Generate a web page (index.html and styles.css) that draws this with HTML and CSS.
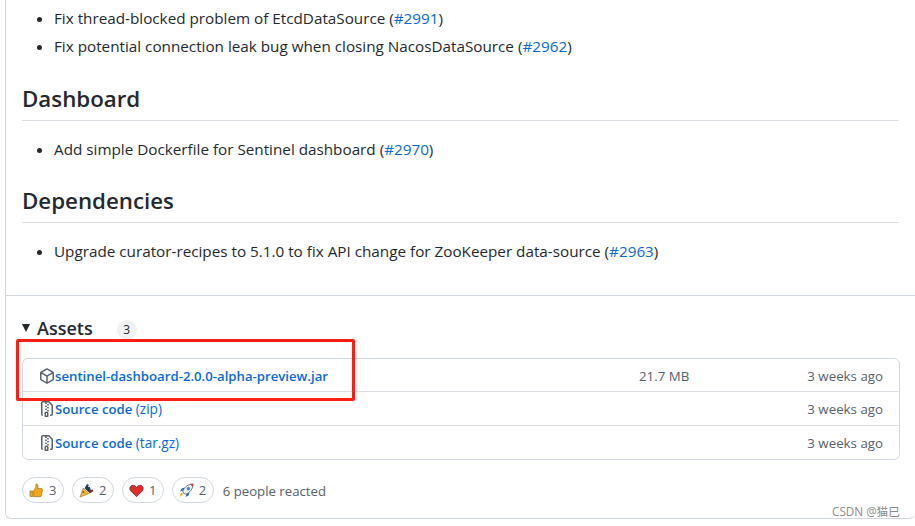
FILE: index.html
```html
<!DOCTYPE html>
<html lang="en">
<head>
  <meta charset="UTF-8" />
  <title>Release notes</title>
  <link rel="stylesheet" href="styles.css">
</head>
<body>
  <div class="release">
    <div class="notes">
      <ul>
        <li>Fix thread-blocked problem of EtcdDataSource (<a href="#">#2991</a>)</li>
        <li>Fix potential connection leak bug when closing NacosDataSource (<a href="#">#2962</a>)</li>
      </ul>
      <h2>Dashboard</h2>
      <ul>
        <li>Add simple Dockerfile for Sentinel dashboard (<a href="#">#2970</a>)</li>
      </ul>
      <h2>Dependencies</h2>
      <ul>
        <li>Upgrade curator-recipes to 5.1.0 to fix API change for ZooKeeper data-source (<a href="#">#2963</a>)</li>
      </ul>
    </div>

    <div class="assets">
      <div class="assets-head">
        <span class="caret"></span>
        <span class="assets-title">Assets</span>
        <span class="counter">3</span>
      </div>

      <div class="asset-box">
        <div class="asset-row">
          <svg class="asset-icon" viewBox="0 0 16 16" width="16" height="16"><path fill="#57606a" fill-rule="evenodd" d="M8.878.392a1.75 1.75 0 0 0-1.756 0l-5.25 3.045A1.75 1.75 0 0 0 1 4.951v6.098c0 .624.332 1.2.872 1.514l5.25 3.045a1.75 1.75 0 0 0 1.756 0l5.25-3.045c.54-.313.872-.89.872-1.514V4.951c0-.624-.332-1.201-.872-1.514L8.878.392ZM7.875 1.69a.25.25 0 0 1 .25 0l4.63 2.685L8 7.133 3.245 4.375l4.63-2.685ZM2.5 5.677v5.372c0 .09.047.171.125.216l4.625 2.683V8.432L2.5 5.677Zm6.25 8.271 4.625-2.683a.25.25 0 0 0 .125-.216V5.677L8.75 8.432v5.516Z"/></svg>
          <a class="asset-name" href="#">sentinel-dashboard-2.0.0-alpha-preview.jar</a>
          <span class="asset-size">21.7 MB</span>
          <span class="asset-time">3 weeks ago</span>
        </div>
        <div class="asset-row">
          <svg class="asset-icon" viewBox="0 0 16 16" width="16" height="16"><path fill="#57606a" fill-rule="evenodd" d="M3.5 1.75v11.5c0 .09.048.173.126.217a.75.75 0 0 1-.752 1.298A1.748 1.748 0 0 1 2 13.25V1.75C2 .784 2.784 0 3.75 0h5.586c.464 0 .909.185 1.237.513l2.914 2.914c.329.328.513.773.513 1.237v8.586A1.75 1.75 0 0 1 12.25 15h-.5a.75.75 0 0 1 0-1.5h.5a.25.25 0 0 0 .25-.25V4.664a.25.25 0 0 0-.073-.177L9.513 1.573a.25.25 0 0 0-.177-.073H7.25a.75.75 0 0 1 0 1.5h-.5a.75.75 0 0 1 0-1.5h-3a.25.25 0 0 0-.25.25Zm3.75 8.75h.5c.966 0 1.75.784 1.75 1.75v3a.75.75 0 0 1-.75.75h-2.5a.75.75 0 0 1-.75-.75v-3c0-.966.784-1.75 1.75-1.75ZM6 5.25a.75.75 0 0 1 .75-.75h.5a.75.75 0 0 1 0 1.5h-.5A.75.75 0 0 1 6 5.25Zm.75 2.25h.5a.75.75 0 0 1 0 1.5h-.5a.75.75 0 0 1 0-1.5ZM8 6.75A.75.75 0 0 1 8.75 6h.5a.75.75 0 0 1 0 1.5h-.5A.75.75 0 0 1 8 6.75ZM8.75 3h.5a.75.75 0 0 1 0 1.5h-.5a.75.75 0 0 1 0-1.5ZM8 9.75A.75.75 0 0 1 8.75 9h.5a.75.75 0 0 1 0 1.5h-.5A.75.75 0 0 1 8 9.75Zm-1 2.5v2.25h1v-2.25a.25.25 0 0 0-.25-.25h-.5a.25.25 0 0 0-.25.25Z"/></svg>
          <a class="asset-name" href="#">Source code <span class="light">(zip)</span></a>
          <span class="asset-time">3 weeks ago</span>
        </div>
        <div class="asset-row">
          <svg class="asset-icon" viewBox="0 0 16 16" width="16" height="16"><path fill="#57606a" fill-rule="evenodd" d="M3.5 1.75v11.5c0 .09.048.173.126.217a.75.75 0 0 1-.752 1.298A1.748 1.748 0 0 1 2 13.25V1.75C2 .784 2.784 0 3.75 0h5.586c.464 0 .909.185 1.237.513l2.914 2.914c.329.328.513.773.513 1.237v8.586A1.75 1.75 0 0 1 12.25 15h-.5a.75.75 0 0 1 0-1.5h.5a.25.25 0 0 0 .25-.25V4.664a.25.25 0 0 0-.073-.177L9.513 1.573a.25.25 0 0 0-.177-.073H7.25a.75.75 0 0 1 0 1.5h-.5a.75.75 0 0 1 0-1.5h-3a.25.25 0 0 0-.25.25Zm3.75 8.75h.5c.966 0 1.75.784 1.75 1.75v3a.75.75 0 0 1-.75.75h-2.5a.75.75 0 0 1-.75-.75v-3c0-.966.784-1.75 1.75-1.75ZM6 5.25a.75.75 0 0 1 .75-.75h.5a.75.75 0 0 1 0 1.5h-.5A.75.75 0 0 1 6 5.25Zm.75 2.25h.5a.75.75 0 0 1 0 1.5h-.5a.75.75 0 0 1 0-1.5ZM8 6.75A.75.75 0 0 1 8.75 6h.5a.75.75 0 0 1 0 1.5h-.5A.75.75 0 0 1 8 6.75ZM8.75 3h.5a.75.75 0 0 1 0 1.5h-.5a.75.75 0 0 1 0-1.5ZM8 9.75A.75.75 0 0 1 8.75 9h.5a.75.75 0 0 1 0 1.5h-.5A.75.75 0 0 1 8 9.75Zm-1 2.5v2.25h1v-2.25a.25.25 0 0 0-.25-.25h-.5a.25.25 0 0 0-.25.25Z"/></svg>
          <a class="asset-name" href="#">Source code <span class="light">(tar.gz)</span></a>
          <span class="asset-time">3 weeks ago</span>
        </div>
      </div>

      <div class="reactions">
        <span class="pill">
          <svg viewBox="0 0 16 16" width="15" height="15"><path fill="#f0a81e" stroke="#8a5a10" stroke-width=".6" d="M1 8.5h3v6H1.6a.6.6 0 0 1-.6-.6ZM5 8l2.3-3.6V1.6c0-.6 1.9-.7 2.2.9.2 1 0 2.3-.3 3.3h4c1.1 0 1.4 1 1.1 1.8l-1.1 6c-.2.7-.7 1-1.4 1H5Z"/></svg>
          <span class="pill-count">3</span>
        </span>
        <span class="pill">
          <svg viewBox="0 0 16 16" width="15" height="15"><path fill="#f2b632" stroke="#8a5a10" stroke-width=".5" d="M1 15 4.6 5.4l6 6Z"/><path fill="#1d3c66" d="M6 5.5 8.5 1l2 1-1 2.6 2-.6 1 2.8-2.4 2.8Z"/><path fill="#7a2a3a" d="m9.5 8 5-1 .8 1.8-4 2.4Z"/><circle cx="4.6" cy="9.5" r=".9" fill="#7a4a10"/></svg>
          <span class="pill-count">2</span>
        </span>
        <span class="pill">
          <svg viewBox="0 0 16 16" width="15" height="15"><path fill="#dd2e2e" stroke="#5a1014" stroke-width=".6" d="M8 14.6 1.8 8.4C-.2 6.2 1 2.4 4.2 2.4 5.9 2.4 7.3 3.3 8 4.7 8.7 3.3 10.1 2.4 11.8 2.4 15 2.4 16.2 6.2 14.2 8.4Z"/></svg>
          <span class="pill-count">1</span>
        </span>
        <span class="pill">
          <svg viewBox="0 0 16 16" width="15" height="15"><path fill="#eef3f6" stroke="#26384a" stroke-width=".7" d="M5 11 4 8.5C6 4 10 1.2 15 1c0 5-3 9-7.5 11Z"/><path fill="#d8362a" d="M12 1.4 15 1c0 1.2-.2 2.3-.5 3.3Z"/><circle cx="10" cy="6" r="1.4" fill="#3b9bd8" stroke="#26384a" stroke-width=".5"/><path fill="#2d6fb0" d="M4.5 8 1 9l2-3.5 3-.5ZM8 11.5 7 15l3.5-2 .5-3Z"/><path fill="#f2a31e" d="M4.3 11.7 1 15l.7-3.7 1.500-.9Z"/></svg>
          <span class="pill-count">2</span>
        </span>
        <span class="reacted">6 people reacted</span>
      </div>
    </div>

    <div class="mark"></div>
    <div class="watermark">CSDN @猫巳</div>
  </div>
</body>
</html>
```

FILE: styles.css
```css
/* base */
html, body {
  height: 526px;
  overflow: hidden;
}
body {
  margin: 0;
  background: #fff;
  color: #24292f;
  font-family: "Open Sans", "Noto Sans CJK SC", sans-serif;
  font-size: 15.25px;
  line-height: 24px;
}
a {
  color: #0969da;
  text-decoration: none;
}

/* outer release card, cut by the window top and right */
.release {
  position: relative;
  height: 519px;
  margin-left: 5px;
  box-sizing: border-box;
  border-left: 1px solid #d0d7de;
  border-bottom: 1px solid #d0d7de;
  border-radius: 0 0 6px 6px;
}

/* notes */
.notes {
  padding: 6px 16px 0;
  height: 296px;
  box-sizing: border-box;
  border-bottom: 1px solid #d0d7de;
}
.notes ul {
  margin: 0;
  padding-left: 32px;
}
.notes li + li {
  margin-top: 4px;
}
.notes h2 {
  margin: 24.5px 0 16px;
  padding-bottom: 5px;
  border-bottom: 1px solid #d8dee4;
  font-size: 22.3px;
  font-weight: 600;
  line-height: 32px;
}

/* assets */
.assets {
  padding: 20px 15px 0 16px;
}
.assets-head {
  display: flex;
  align-items: center;
  height: 24px;
  margin-bottom: 18px;
}
.caret {
  width: 0;
  height: 0;
  margin-right: 7px;
  border-left: 4.5px solid transparent;
  border-right: 4.5px solid transparent;
  border-top: 8px solid #24292f;
}
.assets-title {
  font-size: 18px;
  font-weight: 600;
}
.counter {
  display: flex;
  align-items: center;
  justify-content: center;
  width: 20px;
  height: 20px;
  margin: 4px 0 0 24px;
  border-radius: 10px;
  background: #eff1f3;
  font-size: 12px;
}
.asset-box {
  border: 1px solid #d0d7de;
  border-radius: 6px;
}
.asset-row {
  display: flex;
  align-items: center;
  height: 33px;
  padding: 0 16px;
  font-size: 13.3px;
}
.asset-row:first-child {
  height: 31px;
  padding-top: 1px;
}
.asset-row + .asset-row {
  border-top: 1px solid #d8dee4;
}
.asset-icon {
  flex: none;
}
.asset-name {
  font-size: 13.2px;
  font-weight: 600;
}
.light {
  font-size: 13.6px;
  font-weight: 400;
}
.asset-size {
  margin-left: auto;
  margin-right: 118px;
  color: #57606a;
}
.asset-time {
  margin-left: auto;
  color: #57606a;
}
.asset-size + .asset-time {
  margin-left: 0;
}

/* reactions */
.reactions {
  display: flex;
  align-items: center;
  gap: 7.5px;
  margin-top: 17px;
}
.pill {
  display: flex;
  align-items: center;
  gap: 5px;
  height: 26px;
  box-sizing: border-box;
  padding: 0 7px 0 6px;
  border: 1px solid #d0d7de;
  border-radius: 13px;
}
.pill-count {
  color: #57606a;
  font-size: 13px;
}
.reacted {
  margin: 1px 0 0 1px;
  color: #57606a;
  font-size: 13.2px;
}

/* red marker drawn over the screenshot */
.mark {
  position: absolute;
  left: 10px;
  top: 339px;
  width: 339px;
  height: 62px;
  box-sizing: border-box;
  border: 3px solid #fa1e14;
  border-radius: 2px;
}
.watermark {
  position: absolute;
  right: 15px;
  bottom: -1px;
  color: #8a8a8a;
  font-size: 11.7px;
  line-height: 16px;
}
```
